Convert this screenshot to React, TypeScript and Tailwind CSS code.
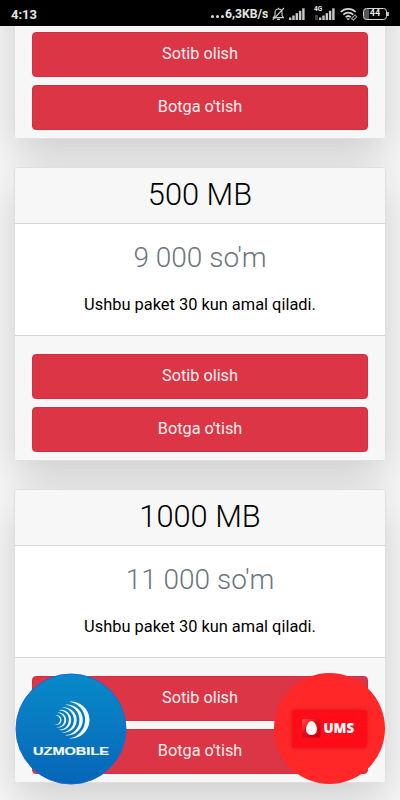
import React from 'react';

type Plan = {
  size?: string;
  price?: string;
};

const plans: Plan[] = [
  {},
  { size: '500 MB', price: "9 000 so'm" },
  { size: '1000 MB', price: "11 000 so'm" },
];

// Logo waves: tip x, right edge, half height, thickness
const waves = [
  [54, 74.5, 18.3, 4.4],
  [50, 67.8, 15.3, 3.4],
  [46.5, 61.7, 12.5, 2.8],
  [43.5, 56.2, 9.8, 2.3],
  [41, 51.2, 7, 1.8],
  [39, 46.5, 4.5, 1.4],
];

const wavePath = ([x, right, h, thickness]: number[]) => {
  const outer = right - x;
  const inner = outer - thickness;
  const radius = (bulge: number) => (h * h + bulge * bulge) / (2 * bulge);
  return `M${x} ${47 - h}A${radius(outer)} ${radius(outer)} 0 ${outer > h ? 1 : 0} 1 ${x} ${47 + h}A${radius(inner)} ${radius(inner)} 0 ${inner > h ? 1 : 0} 0 ${x} ${47 - h}Z`;
};

const Signal = () => (
  <svg width="16" height="12" viewBox="0 0 16 12" fill="#c9c9c9">
    <rect x="0" y="9.5" width="2.4" height="2.5" />
    <rect x="3.3" y="7.5" width="2.4" height="4.5" />
    <rect x="6.6" y="5.2" width="2.4" height="6.8" />
    <rect x="9.9" y="2.8" width="2.4" height="9.2" />
    <rect x="13.2" y="0.3" width="2.4" height="11.7" />
  </svg>
);

const StatusBar = () => (
  <header className="relative z-20 flex h-[26px] shrink-0 items-center bg-black pl-[11px] pr-[11px] pt-px text-[#e6e6e6]">
    <span className="pt-px text-[13px] font-bold leading-none">4:13</span>
    <div className="ml-auto flex items-center">
      <span className="mr-px mt-[5px] flex gap-[2px]">
        <i className="size-[3px] rounded-full bg-[#dedede]" />
        <i className="size-[3px] rounded-full bg-[#dedede]" />
        <i className="size-[3px] rounded-full bg-[#dedede]" />
      </span>
      <span className="w-[43px] whitespace-nowrap pt-px text-[12.2px] font-bold leading-none">6,3KB/s</span>
      {/* Muted bell */}
      <svg className="ml-[4px]" width="13" height="14" viewBox="0 0 13 14" fill="none" stroke="#d0d0d0" strokeWidth="1.1">
        <path d="M1.3 10.6h10.2L10 8.6V5.8C10 3.4 8.5 2 6.5 2S3 3.4 3 5.8v2.8L1.3 10.6Z" />
        <path d="M6.5 2V.8M5 12.4h3M.8 12.8 12 1" />
      </svg>
      <span className="ml-[4px]">
        <Signal />
      </span>
      <span className="relative ml-[14px]">
        <Signal />
        <span className="absolute -left-[5px] -top-[2px] text-[6.5px] font-bold leading-none">4G</span>
        <i className="absolute -left-[4px] bottom-0 h-[5px] w-[3px] bg-[#444]" />
      </span>
      {/* Wifi */}
      <svg className="ml-[5px]" width="18" height="14" viewBox="0 0 18 14" fill="none" stroke="#d4d4d4" strokeWidth="1.7">
        <path d="M.8 5C5 .8 11.500.8 15.700 5" />
        <path d="M3.300 7.700c2.900-2.900 7-2.900 9.900 0" />
        <path d="M5.700 10.200c1.500-1.500 3.600-1.500 5.100 0" />
        <path d="m7 11.700 1.250 1.400 1.250-1.400Z" fill="#d4d4d4" strokeWidth=".6" />
        <path d="m11.500 11.500 3.500-3.500 1.800 1.800-3.400 3.400Z" stroke="#999" strokeWidth="1.100" />
      </svg>
      <span className="ml-[5px] flex h-[12px] w-[24px] items-center justify-center rounded-[3.500px] border-[1.500px] border-[#d8d8d8] bg-linear-to-r from-[#555] from-25% to-black to-25% text-[9px] font-bold leading-none">
        44
      </span>
      <i className="h-[4px] w-[2px] bg-[#bbb]" />
    </div>
  </header>
);

const ActionButton = ({ label }: { label: string }) => (
  <button className="flex h-[44.500px] w-full items-center justify-center rounded-[4px] border border-[#d52e40] bg-[#dc3545] text-[16.300px] leading-none text-[#fceff0]">
    {label}
  </button>
);

const PlanCard = ({ size, price }: Plan) => (
  <section className="flex h-[294px] shrink-0 flex-col justify-end overflow-hidden rounded-[4px] border border-[#dfdfdf] bg-white text-center">
    {size && (
      <>
        <h4 className="h-[56px] border-b border-[#d6d6d6] bg-[#f7f7f7] pt-[9px] text-[30.800px] font-light leading-[36px] text-black">
          {size}
        </h4>
        <div className="flex flex-1 flex-col">
          <h1 className="mt-[16px] text-[28px] font-light leading-[36px] text-[#6c757d]">{price}</h1>
          <p className="mt-[17px] text-[16.400px] leading-[24px] text-black">Ushbu paket 30 kun amal qiladi.</p>
        </div>
      </>
    )}
    <div className="flex h-[125px] flex-col gap-[8.500px] border-t border-[#d6d6d6] bg-[#f7f7f7] px-[17px] pt-[18px]">
      <ActionButton label="Sotib olish" />
      <ActionButton label="Botga o'tish" />
    </div>
  </section>
);

const UzmobileLogo = () => (
  <svg viewBox="0 0 112 112" className="size-[112px]">
    <defs>
      <linearGradient id="uz" x1="0" y1="0" x2="0" y2="1">
        <stop offset="0" stopColor="#068ac9" />
        <stop offset=".5" stopColor="#0878c0" />
        <stop offset="1" stopColor="#0765b8" />
      </linearGradient>
    </defs>
    <circle cx="56" cy="56" r="55" fill="url(#uz)" stroke="#1668dc" />
    <g fill="#f4fbff">
      {waves.map((wave) => (
        <path key={wave[0]} d={wavePath(wave)} />
      ))}
    </g>
    <text x="56" y="82" textAnchor="middle" textLength="76" lengthAdjust="spacingAndGlyphs" fontSize="11.500" fontWeight="700" fontFamily="Liberation Sans, Arial, sans-serif" fill="#f4fbff" stroke="#f4fbff" strokeWidth=".2">
      UZMOBILE
    </text>
  </svg>
);

const UmsLogo = () => (
  <div className="flex size-[111px] items-center justify-center rounded-full bg-[#ff2728]">
    <div className="flex h-[38px] w-[75px] items-center rounded-[3px] bg-[#ff0c18] pl-[10px] shadow-[0_0_4px_rgba(150,0,0,0.4)]">
      <svg width="19" height="19" viewBox="0 0 19 19">
        <defs>
          <linearGradient id="ums" x1="0" y1="0" x2="1" y2="1">
            <stop offset="0" stopColor="#ff5a52" />
            <stop offset=".4" stopColor="#e3101a" />
            <stop offset="1" stopColor="#b80010" />
          </linearGradient>
        </defs>
        <rect width="18.500" height="18.500" rx="1.500" fill="url(#ums)" />
        <path d="M9.500 2C12.500 2 15 7 15 10.500a5.500 5.500 0 0 1-11 0C4 7 6.500 2 9.500 2Z" fill="#fff4f2" />
      </svg>
      <span className="ml-[3px] font-['Open_Sans',sans-serif] text-[13.300px] font-extrabold leading-none text-white">
        UMS
      </span>
    </div>
  </div>
);

export default function App() {
  return (
    <div className="relative flex h-[800px] w-[400px] flex-col overflow-hidden bg-[#f8f8f8] font-[Roboto,sans-serif]">
      <StatusBar />
      <main className="-mt-[181px] flex flex-col gap-[28px] px-[14px]">
        {plans.map((plan, index) => (
          <div key={index} className="rounded-[4px] shadow-[0_15px_45px_rgba(0,0,0,0.175)]">
            <PlanCard {...plan} />
          </div>
        ))}
      </main>

      {/* Floating operator buttons */}
      <a className="absolute left-[15px] top-[673px]">
        <UzmobileLogo />
      </a>
      <a className="absolute left-[273.500px] top-[673px]">
        <UmsLogo />
      </a>
    </div>
  );
}
